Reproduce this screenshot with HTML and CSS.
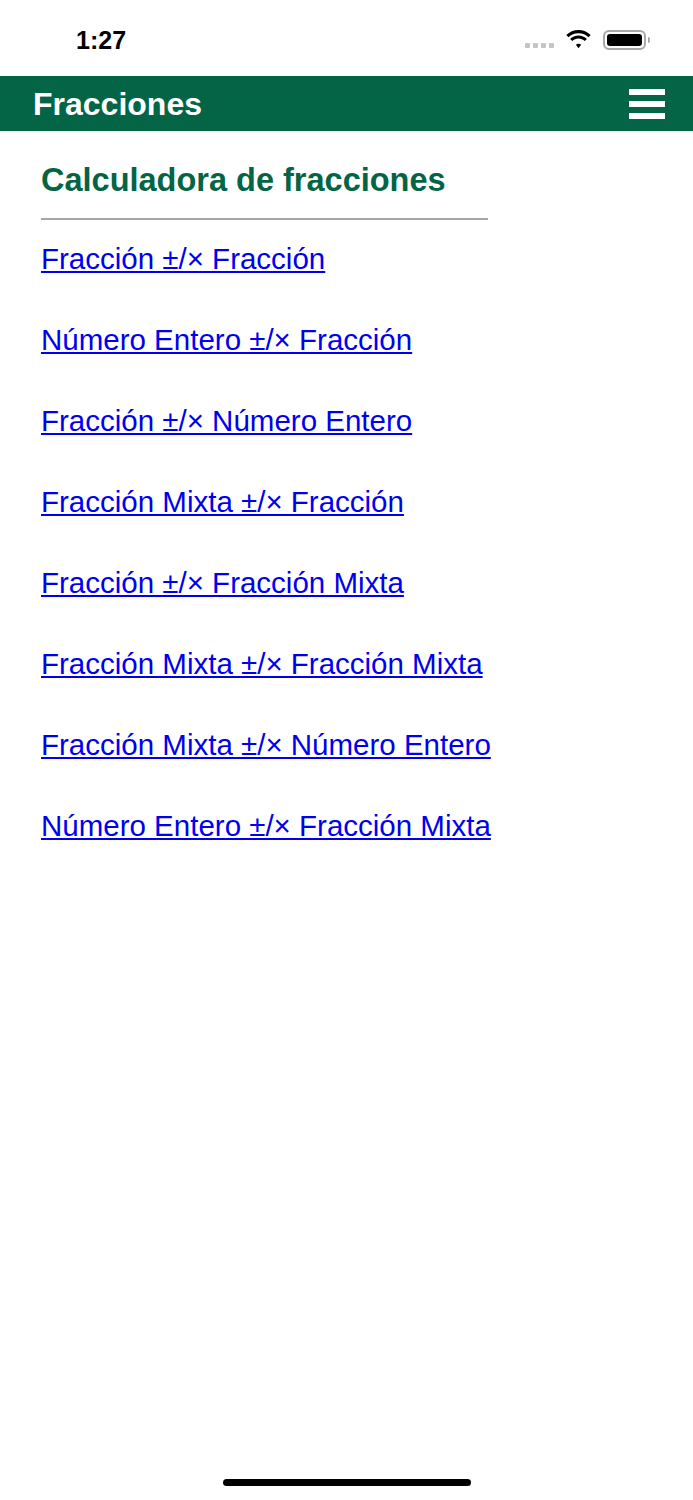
FILE: index.html
```html
<!DOCTYPE html>
<html lang="es">
<head>
    <meta charset="UTF-8">
    <meta name="viewport" content="width=device-width, initial-scale=1.0">
    <title>Fracciones</title>
    <link rel="stylesheet" href="styles.css">
</head>
<body>

    <!-- Status bar -->
    <div class="status-bar">
        <span class="time">1:27</span>
        <div class="status-icons">
            <span class="signal">
                <i></i><i></i><i></i><i></i>
            </span>
            <svg class="wifi" width="27" height="19" viewBox="0 0 27 19">
                <path d="M13.5 3.2c3.9 0 7.4 1.5 10 4l2.2-2.2C22.5 1.9 18.2 0 13.5 0S4.5 1.9 1.3 5L3.5 7.2c2.6-2.5 6.1-4 10-4z" fill="#000"/>
                <path d="M13.5 8.6c2.4 0 4.6.9 6.2 2.5l2.2-2.2c-2.2-2.1-5.1-3.4-8.4-3.4S7.3 6.8 5.1 8.9l2.2 2.2c1.6-1.6 3.8-2.5 6.2-2.5z" fill="#000"/>
                <path d="M13.5 13.7c1 0 1.9.4 2.6 1l-2.6 3.6-2.6-3.6c.7-.6 1.6-1 2.6-1z" fill="#000"/>
            </svg>
            <span class="battery"><span class="battery-level"></span></span>
        </div>
    </div>

    <!-- Header -->
    <header class="app-header">
        <span class="app-title">Fracciones</span>
        <span class="menu-icon"><i></i><i></i><i></i></span>
    </header>

    <main class="content">
        <h2>Calculadora de fracciones</h2>
        <hr>
        <ul class="calc-list">
            <li><a href="#">Fracción ±/× Fracción</a></li>
            <li><a href="#">Número Entero ±/× Fracción</a></li>
            <li><a href="#">Fracción ±/× Número Entero</a></li>
            <li><a href="#">Fracción Mixta ±/× Fracción</a></li>
            <li><a href="#">Fracción ±/× Fracción Mixta</a></li>
            <li><a href="#">Fracción Mixta ±/× Fracción Mixta</a></li>
            <li><a href="#">Fracción Mixta ±/× Número Entero</a></li>
            <li><a href="#">Número Entero ±/× Fracción Mixta</a></li>
        </ul>
    </main>

    <div class="home-indicator"></div>

</body>
</html>
```

FILE: styles.css
```css
body {
    font-family: 'Liberation Sans', Arial, sans-serif;
    background-color: #fff;
    margin: 0;
    height: 1500px;
    position: relative;
}

/* status bar */
.status-bar {
    height: 76px;
    display: flex;
    align-items: center;
    justify-content: space-between;
    padding: 0 47px 0 76px;
    box-sizing: border-box;
}

.time {
    font-size: 25px;
    font-weight: bold;
    color: #000;
    margin-top: 4px;
}

.status-icons {
    display: flex;
    align-items: center;
    gap: 11px;
    margin-top: 3px;
}

.signal {
    display: flex;
    gap: 3px;
    margin-top: 12px;
}

.signal i {
    width: 5px;
    height: 5px;
    border-radius: 1px;
    background-color: #c4c4c4;
}

.battery {
    width: 43px;
    height: 20px;
    border: 2px solid #a8a8a8;
    border-radius: 6px;
    padding: 2px;
    box-sizing: border-box;
    position: relative;
}

.battery::after {
    content: "";
    position: absolute;
    right: -6px;
    top: 5px;
    width: 2px;
    height: 6px;
    background-color: #a8a8a8;
    border-radius: 0 2px 2px 0;
}

.battery-level {
    display: block;
    height: 100%;
    background-color: #000;
    border-radius: 3px;
}

/* header */
.app-header {
    height: 55px;
    background-color: #046446;
    display: flex;
    align-items: center;
    justify-content: space-between;
    padding: 0 28px 0 33px;
}

.app-title {
    color: #fff;
    font-size: 32px;
    font-weight: bold;
    margin-top: 2px;
}

.menu-icon {
    display: flex;
    flex-direction: column;
    gap: 6px;
}

.menu-icon i {
    width: 36px;
    height: 6px;
    background-color: #fff;
}

/* content */
.content {
    padding: 0 41px;
}

h2 {
    margin: 32px 0 0;
    width: 447px;
    font-size: 32.5px;
    line-height: 34px;
    color: #046446;
}

hr {
    width: 447px;
    margin: 21px 0 0;
    border: none;
    border-top: 2px solid #a6a6a6;
}

.calc-list {
    list-style: none;
    margin: 23px 0 0;
    padding: 0;
    display: flex;
    flex-direction: column;
    gap: 49px;
}

.calc-list li {
    font-size: 29.5px;
    line-height: 32px;
}

.calc-list a {
    color: #0000ee;
}

.home-indicator {
    position: absolute;
    left: 223px;
    top: 1479px;
    width: 248px;
    height: 7px;
    border-radius: 4px;
    background-color: #000;
}
```
